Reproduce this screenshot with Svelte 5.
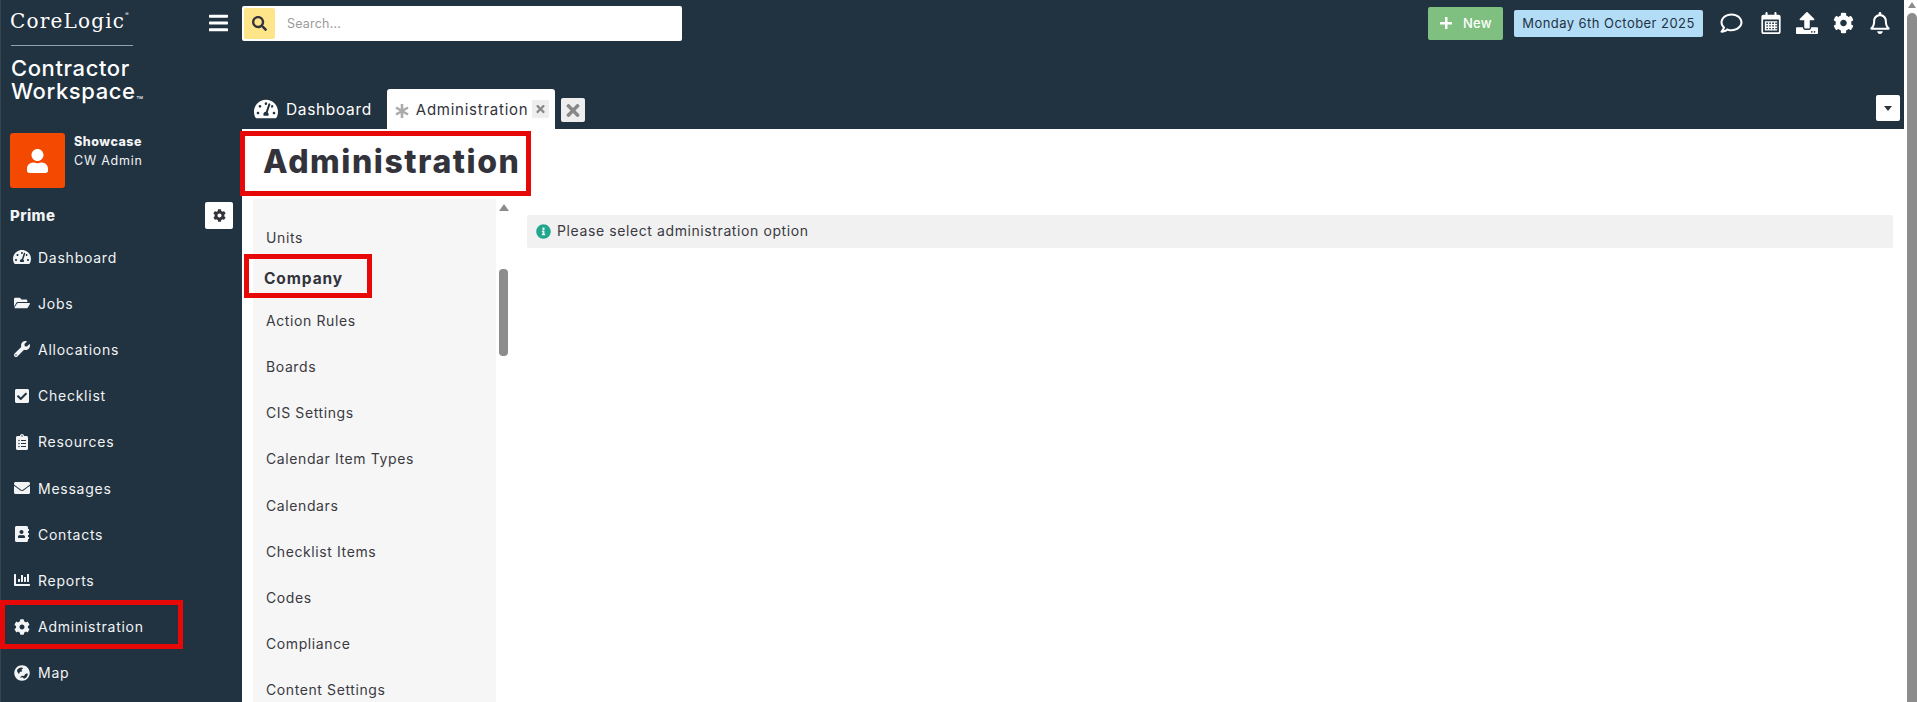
<script>
  const P = {
    tach: [576, 'M288 32C128.94 32 0 160.94 0 320c0 52.8 14.25 102.26 39.06 144.8 5.61 9.62 16.3 15.2 27.44 15.2h443c11.14 0 21.83-5.58 27.44-15.2C561.75 422.26 576 372.8 576 320c0-159.06-128.94-288-288-288zm0 64c14.71 0 26.58 10.13 30.32 23.65-1.11 2.26-2.64 4.23-3.45 6.67l-9.22 27.67c-5.13 3.49-10.97 6.01-17.64 6.01-17.67 0-32-14.33-32-32S270.33 96 288 96zM96 384c-17.67 0-32-14.33-32-32s14.33-32 32-32 32 14.33 32 32-14.33 32-32 32zm48-160c-17.67 0-32-14.33-32-32s14.33-32 32-32 32 14.33 32 32-14.33 32-32 32zm246.77-72.41l-61.33 184C343.13 347.33 352 364.54 352 384c0 11.72-3.38 22.55-8.88 32H232.88c-5.5-9.45-8.88-20.28-8.88-32 0-33.94 26.5-61.43 59.9-63.59l61.34-184.01c4.17-12.56 17.73-19.45 30.36-15.17 12.57 4.19 19.35 17.77 15.17 30.36zm14.66 57.2l15.52-46.55c3.47-1.29 7.13-2.23 11.05-2.23 17.67 0 32 14.33 32 32s-14.33 32-32 32c-11.38-.01-20.89-6.28-26.57-15.22zM480 384c-17.67 0-32-14.33-32-32s14.33-32 32-32 32 14.33 32 32-14.33 32-32 32z'],
    folder: [576, 'M572.694 292.093L500.27 416.248A63.997 63.997 0 0 1 444.989 448H45.025c-18.523 0-30.064-20.093-20.731-36.093l72.424-124.155A64 64 0 0 1 152 256h399.964c18.523 0 30.064 20.093 20.73 36.093zM152 224h328v-48c0-26.51-21.49-48-48-48H272l-64-64H48C21.49 64 0 85.49 0 112v278.046l69.077-118.418C86.214 242.25 117.989 224 152 224z'],
    wrench: [512, 'M507.73 109.1c-2.24-9.03-13.54-12.09-20.12-5.51l-74.36 74.36-67.88-11.31-11.31-67.88 74.36-74.36c6.62-6.62 3.43-17.9-5.66-20.16-47.38-11.74-99.55.91-136.58 37.93-39.64 39.64-50.55 97.1-34.05 147.2L18.74 402.76c-24.99 24.99-24.99 65.51 0 90.5 24.99 24.99 65.51 24.99 90.5 0l213.21-213.21c50.12 16.71 107.47 5.68 147.37-34.22 37.07-37.07 49.7-89.32 37.91-136.73zM64 472c-13.25 0-24-10.75-24-24 0-13.26 10.75-24 24-24s24 10.74 24 24c0 13.25-10.75 24-24 24z'],
    check: [448, 'M400 480H48c-26.51 0-48-21.49-48-48V80c0-26.51 21.49-48 48-48h352c26.51 0 48 21.49 48 48v352c0 26.51-21.49 48-48 48zm-204.686-98.059l184-184c6.248-6.248 6.248-16.379 0-22.627l-22.627-22.627c-6.248-6.248-16.379-6.249-22.628 0L184 302.745l-70.059-70.059c-6.248-6.248-16.379-6.248-22.628 0l-22.627 22.627c-6.248 6.248-6.248 16.379 0 22.627l104 104c6.249 6.25 16.379 6.25 22.628.001z'],
    clip: [384, 'M336 64h-80c0-35.3-28.7-64-64-64s-64 28.7-64 64H48C21.5 64 0 85.5 0 112v352c0 26.5 21.5 48 48 48h288c26.5 0 48-21.5 48-48V112c0-26.5-21.5-48-48-48zM96 424c-13.3 0-24-10.7-24-24s10.7-24 24-24 24 10.7 24 24-10.7 24-24 24zm0-96c-13.3 0-24-10.7-24-24s10.7-24 24-24 24 10.7 24 24-10.7 24-24 24zm0-96c-13.3 0-24-10.7-24-24s10.7-24 24-24 24 10.7 24 24-10.7 24-24 24zm96-192c13.3 0 24 10.7 24 24s-10.7 24-24 24-24-10.7-24-24 10.7-24 24-24zm128 368c0 4.4-3.6 8-8 8H168c-4.4 0-8-3.6-8-8v-16c0-4.4 3.6-8 8-8h144c4.4 0 8 3.6 8 8v16zm0-96c0 4.4-3.6 8-8 8H168c-4.4 0-8-3.6-8-8v-16c0-4.4 3.6-8 8-8h144c4.4 0 8 3.6 8 8v16zm0-96c0 4.4-3.6 8-8 8H168c-4.4 0-8-3.6-8-8v-16c0-4.4 3.6-8 8-8h144c4.4 0 8 3.6 8 8v16z'],
    env: [512, 'M502.3 190.8c3.9-3.1 9.7-.2 9.7 4.7V400c0 26.5-21.5 48-48 48H48c-26.5 0-48-21.5-48-48V195.6c0-5 5.7-7.8 9.7-4.7 22.4 17.4 52.1 39.5 154.1 113.6 21.1 15.4 56.7 47.8 92.2 47.6 35.7.3 72-32.8 92.3-47.6 102-74.1 131.6-96.3 154-113.7zM256 320c23.2.4 56.6-29.2 73.4-41.4 132.7-96.3 142.8-104.7 173.4-128.7 5.8-4.5 9.2-11.5 9.2-18.9v-19c0-26.5-21.5-48-48-48H48C21.5 64 0 85.5 0 112v19c0 7.4 3.4 14.3 9.2 18.9 30.6 23.9 40.7 32.4 173.4 128.7 16.8 12.2 50.2 41.8 73.4 41.4z'],
    book: [448, 'M436 160c6.6 0 12-5.4 12-12v-40c0-6.6-5.4-12-12-12h-20V48c0-26.5-21.5-48-48-48H48C21.5 0 0 21.5 0 48v416c0 26.5 21.5 48 48 48h320c26.5 0 48-21.5 48-48v-48h20c6.6 0 12-5.4 12-12v-40c0-6.6-5.4-12-12-12h-20v-64h20c6.6 0 12-5.4 12-12v-40c0-6.6-5.4-12-12-12h-20v-64h20zm-228-32c35.3 0 64 28.7 64 64s-28.7 64-64 64-64-28.7-64-64 28.7-64 64-64zm112 236.8c0 10.6-10 19.2-22.4 19.2H118.4C106 384 96 375.4 96 364.8v-19.2c0-31.8 30.1-57.6 67.2-57.6h5c12.3 5.1 25.7 8 39.8 8s27.6-2.9 39.8-8h5c37.1 0 67.2 25.8 67.2 57.6v19.2z'],
    chart: [512, 'M332.8 320h38.4c6.4 0 12.8-6.4 12.8-12.8V172.8c0-6.4-6.4-12.8-12.8-12.8h-38.4c-6.4 0-12.8 6.4-12.8 12.8v134.4c0 6.4 6.4 12.8 12.8 12.8zm96 0h38.4c6.4 0 12.8-6.4 12.8-12.8V76.8c0-6.4-6.4-12.8-12.8-12.8h-38.4c-6.4 0-12.8 6.4-12.8 12.8v230.4c0 6.4 6.4 12.8 12.8 12.8zm-288 0h38.4c6.4 0 12.8-6.4 12.8-12.8v-70.4c0-6.4-6.4-12.8-12.8-12.8h-38.4c-6.4 0-12.8 6.4-12.8 12.8v70.4c0 6.4 6.4 12.8 12.8 12.8zm96 0h38.4c6.4 0 12.8-6.4 12.8-12.8V108.8c0-6.4-6.4-12.8-12.8-12.8h-38.4c-6.4 0-12.8 6.4-12.8 12.8v198.4c0 6.4 6.4 12.8 12.8 12.8zM496 384H64V80c0-8.84-7.16-16-16-16H16C7.16 64 0 71.16 0 80v336c0 17.67 14.33 32 32 32h464c8.84 0 16-7.16 16-16v-32c0-8.84-7.16-16-16-16z'],
    cog: [512, 'M487.4 315.7l-42.6-24.6c4.3-23.2 4.3-47 0-70.2l42.6-24.6c4.9-2.8 7.1-8.6 5.5-14-11.1-35.6-30-67.8-54.7-94.6-3.8-4.1-10-5.1-14.8-2.3L380.8 110c-17.9-15.4-38.5-27.3-60.8-35.1V25.8c0-5.6-3.9-10.5-9.4-11.7-36.7-8.2-74.3-7.8-109.2 0-5.5 1.2-9.4 6.1-9.4 11.7V75c-22.2 7.9-42.8 19.8-60.8 35.1L88.7 85.5c-4.9-2.8-11-1.9-14.8 2.3-24.7 26.7-43.6 58.9-54.7 94.6-1.7 5.4.6 11.2 5.5 14L67.3 221c-4.3 23.2-4.3 47 0 70.2l-42.6 24.6c-4.9 2.8-7.1 8.6-5.5 14 11.1 35.6 30 67.8 54.7 94.6 3.8 4.1 10 5.1 14.8 2.3l42.6-24.6c17.9 15.4 38.5 27.3 60.8 35.1v49.2c0 5.6 3.9 10.5 9.4 11.7 36.7 8.2 74.3 7.8 109.2 0 5.5-1.2 9.4-6.1 9.4-11.7v-49.2c22.2-7.9 42.8-19.8 60.8-35.1l42.6 24.6c4.9 2.8 11 1.9 14.8-2.3 24.7-26.7 43.6-58.9 54.7-94.6 1.5-5.5-.7-11.3-5.6-14.1zM256 336c-44.1 0-80-35.9-80-80s35.9-80 80-80 80 35.9 80 80-35.9 80-80 80z'],
    globe: [512, 'M256 8C119 8 8 119 8 256s111 248 248 248 248-111 248-248S393 8 256 8zm-16 70c18 0 30 8 44 16 10 6 6 18-4 22l-30 16c-12 6-14 20-6 30l14 18c8 10 2 24-10 26l-40 8c-14 2-26 14-30 28l-8 26c-4 14-20 16-28 4l-32-46c-8-12-12-26-12-42 0-58 72-106 142-106zm160 190c18 0 40 4 40 18 0 58-42 120-96 146-10 4-22 2-30-4l-34-26c-12-8-28-10-42-4l-18 8c-14 4-24-10-14-22l24-28c10-12 26-18 42-14l24 6c14 4 28-2 36-14l24-38c8-16 26-28 44-28z'],
    user: [448, 'M224 256c70.7 0 128-57.3 128-128S294.7 0 224 0 96 57.3 96 128s57.3 128 128 128zm89.6 32h-16.7c-22.2 10.2-46.9 16-72.9 16s-50.6-5.8-72.9-16h-16.7C60.2 288 0 348.2 0 422.4V464c0 26.5 21.5 48 48 48h352c26.5 0 48-21.5 48-48v-41.6c0-74.2-60.2-134.4-134.4-134.4z'],
    info: [512, 'M256 8C119.043 8 8 119.083 8 256c0 136.997 111.043 248 248 248s248-111.003 248-248C504 119.083 392.957 8 256 8zm0 110c23.196 0 42 18.804 42 42s-18.804 42-42 42-42-18.804-42-42 18.804-42 42-42zm56 254c0 6.627-5.373 12-12 12h-88c-6.627 0-12-5.373-12-12v-24c0-6.627 5.373-12 12-12h12v-64h-12c-6.627 0-12-5.373-12-12v-24c0-6.627 5.373-12 12-12h64c6.627 0 12 5.373 12 12v100h12c6.627 0 12 5.373 12 12v24z'],
    times: [352, 'M242.72 256l100.07-100.07c12.28-12.28 12.28-32.19 0-44.48l-22.24-22.24c-12.28-12.28-32.19-12.28-44.48 0L176 189.28 75.93 89.21c-12.28-12.28-32.19-12.28-44.48 0L9.21 111.45c-12.28 12.28-12.28 32.19 0 44.48L109.28 256 9.21 356.07c-12.28 12.28-12.28 32.19 0 44.48l22.24 22.24c12.28 12.28 32.2 12.28 44.48 0L176 322.72l100.07 100.07c12.28 12.28 32.2 12.28 44.48 0l22.24-22.24c12.28-12.28 12.28-32.19 0-44.48L242.72 256z'],
    bars: [448, 'M16 132h416c8.837 0 16-7.163 16-16V76c0-8.837-7.163-16-16-16H16C7.163 60 0 67.163 0 76v40c0 8.837 7.163 16 16 16zm0 160h416c8.837 0 16-7.163 16-16v-40c0-8.837-7.163-16-16-16H16c-8.837 0-16 7.163-16 16v40c0 8.837 7.163 16 16 16zm0 160h416c8.837 0 16-7.163 16-16v-40c0-8.837-7.163-16-16-16H16c-8.837 0-16 7.163-16 16v40c0 8.837 7.163 16 16 16z'],
    search: [512, 'M505 442.7L405.3 343c-4.5-4.5-10.6-7-17-7H372c27.6-35.3 44-79.7 44-128C416 93.1 322.9 0 208 0S0 93.1 0 208s93.1 208 208 208c48.3 0 92.7-16.4 128-44v16.3c0 6.4 2.5 12.5 7 17l99.7 99.7c9.4 9.4 24.6 9.4 33.9 0l28.3-28.3c9.4-9.4 9.4-24.6.1-34zM208 336c-70.7 0-128-57.2-128-128 0-70.7 57.2-128 128-128 70.7 0 128 57.2 128 128 0 70.7-57.2 128-128 128z'],
    upload: [512, 'M296 384h-80c-13.3 0-24-10.7-24-24V192h-87.7c-17.8 0-26.7-21.5-14.1-34.1L242.3 5.7c7.5-7.5 19.8-7.5 27.3 0l152.2 152.2c12.6 12.6 3.7 34.1-14.1 34.1H320v168c0 13.3-10.7 24-24 24zm216-8v112c0 13.3-10.7 24-24 24H24c-13.3 0-24-10.7-24-24V376c0-13.3 10.7-24 24-24h136v8c0 30.9 25.1 56 56 56h80c30.9 0 56-25.1 56-56v-8h136c13.3 0 24 10.7 24 24zm-124 88c0-11-9-20-20-20s-20 9-20 20 9 20 20 20 20-9 20-20zm64 0c0-11-9-20-20-20s-20 9-20 20 9 20 20 20 20-9 20-20z'],
    comment: [512, 'M256 32C114.6 32 0 125.1 0 240c0 47.6 19.9 91.2 52.9 126.3C38 405.7 7 439.1 6.5 439.5c-6.6 7-8.4 17.2-4.6 26S14.4 480 24 480c61.5 0 110-25.7 139.1-46.3C192 442.8 223.2 448 256 448c141.4 0 256-93.1 256-208S397.4 32 256 32zm0 368c-26.7 0-53.1-4.1-78.4-12.1l-22.7-7.2-19.5 13.8c-14.3 10.1-33.9 21.4-57.5 29 7.3-12.1 14.4-25.7 19.9-40.2l10.6-28.1-20.6-21.8C69.7 314.1 48 282.2 48 240c0-88.2 93.3-160 208-160s208 71.8 208 160-93.3 160-208 160z'],
    bell: [448, 'M439.39 362.29c-19.32-20.76-55.47-51.99-55.47-154.29 0-77.7-54.48-139.9-127.94-155.16V32c0-17.67-14.32-32-31.98-32s-31.98 14.33-31.98 32v20.84C118.56 68.1 64.08 130.3 64.08 208c0 102.3-36.15 133.53-55.47 154.29-6 6.45-8.66 14.16-8.61 21.71.11 16.4 12.98 32 32.1 32h383.8c19.12 0 32-15.6 32.1-32 .05-7.55-2.61-15.27-8.61-21.71zM67.53 368c21.22-27.97 44.42-74.33 44.53-159.42 0-.2-.06-.38-.06-.58 0-61.86 50.14-112 112-112s112 50.14 112 112c0 .2-.06.38-.06.58.11 85.1 23.31 131.46 44.53 159.42H67.53zM224 512c35.32 0 63.97-28.65 63.97-64H160.03c0 35.35 28.65 64 63.97 64z'],
    cal: [448, 'M400 64h-48V24c0-13-11-24-24-24s-24 11-24 24v40H144V24c0-13-11-24-24-24S96 11 96 24v40H48C21.5 64 0 85.5 0 112v352c0 26.5 21.5 48 48 48h352c26.5 0 48-21.5 48-48V112c0-26.5-21.5-48-48-48zm8 400c0 4.4-3.6 8-8 8H48c-4.4 0-8-3.6-8-8V176h368v288zM80 216v216h288V216H80zm72 64h-36v-36h36v36zm68 0h-36v-36h36v36zm72 0h-40v-36h40v36zm44 0h-12v-36h36v36h-24zm-184 60h-36v-32h36v32zm68 0h-36v-32h36v32zm72 0h-40v-32h40v32zm56 0h-24v-32h36v32h-12zm-196 64h-36v-32h36v32zm68 0h-36v-32h36v32zm72 0h-40v-32h40v32zm68 0h-36v-32h36v32z']
  };
  const nav = [['tach','Dashboard'],['folder','Jobs'],['wrench','Allocations'],['check','Checklist'],['clip','Resources'],['env','Messages'],['book','Contacts'],['chart','Reports'],['cog','Administration'],['globe','Map']];
  const adminItems = ['Action Rules','Boards','CIS Settings','Calendar Item Types','Calendars','Checklist Items','Codes','Compliance','Content Settings'];
</script>

{#snippet icon(name, cls)}
  <svg class={cls} viewBox="0 0 {P[name][0]} 512" fill="currentColor" fill-rule="evenodd" aria-hidden="true"><path d={P[name][1]} /></svg>
{/snippet}

<div class="app">
  <aside class="sidebar">
    <div class="brand">
      <div class="brand-top">
        <div class="corelogic">CoreLogic<sup>®</sup></div>
        {@render icon('bars', 'ic-bars')}
      </div>
      <div class="rule"></div>
      <div class="workspace">Contractor<br />Workspace<small>TM</small></div>
    </div>
    <div class="profile">
      <div class="avatar">{@render icon('user', 'ic-avatar')}</div>
      <div class="who"><strong>Showcase</strong><span>CW Admin</span></div>
    </div>
    <div class="prime">
      <strong>Prime</strong>
      <button class="prime-btn">{@render icon('cog', 'ic-prime')}</button>
    </div>
    <nav class="nav">
      {#each nav as [ic, label]}
        <div class="nav-item">
          <span class="nav-ic">{@render icon(ic, 'ic-nav ' + ic)}</span>
          <span>{label}</span>
        </div>
      {/each}
    </nav>
  </aside>

  <main class="main">
    <header class="head">
      <div class="topbar">
        <div class="search">
          <span class="search-btn">{@render icon('search', 'ic-search')}</span>
          <span class="search-ph">Search...</span>
        </div>
        <div class="spacer"></div>
        <button class="new"><span class="plus"></span>New</button>
        <div class="date">Monday 6th October 2025</div>
        <div class="tools">
          {@render icon('comment', 'ic-tool t-comment')}
          {@render icon('cal', 'ic-tool t-cal')}
          {@render icon('upload', 'ic-tool t-up')}
          {@render icon('cog', 'ic-tool t-cog')}
          {@render icon('bell', 'ic-tool t-bell')}
        </div>
      </div>
      <div class="tabs">
        <div class="tab">{@render icon('tach', 'ic-tab')}Dashboard</div>
        <div class="tab active">
          <svg class="ic-ast" viewBox="0 0 16 16" aria-hidden="true"><path d="M8 1v14M2 4.5l12 7M14 4.5l-12 7" /></svg>
          <span>Administration</span>
          <span class="tab-x">{@render icon('times', 'ic-x')}</span>
        </div>
        <span class="close-all">{@render icon('times', 'ic-xl')}</span>
        <div class="spacer"></div>
        <button class="caret"><span></span></button>
      </div>
    </header>

    <div class="body">
      <h1 class="title">Administration</h1>
      <div class="split">
        <div class="list-wrap">
          <div class="list">
            <div class="item first">Units</div>
            <div class="group">Company</div>
            {#each adminItems as it}
              <div class="item">{it}</div>
            {/each}
          </div>
          <div class="list-scroll">
            <span class="arrow"></span>
            <span class="thumb"></span>
          </div>
        </div>
        <div class="content">
          <div class="alert">{@render icon('info', 'ic-info')}Please select administration option</div>
        </div>
      </div>
    </div>
  </main>

  <div class="page-scroll"><span class="arrow"></span><span class="thumb"></span></div>

  <div class="mark m-title"></div>
  <div class="mark m-company"></div>
  <div class="mark m-nav"></div>
</div>

<style>
  :global(body) { margin: 0; background: #fff; overflow: hidden; }
  .app {
    position: relative; display: flex; height: 702px; overflow: hidden;
    font-family: Inter, "Open Sans", sans-serif; color: #33333b;
  }
  .sidebar {
    width: 242px; flex: none; background: #213240; color: #f2f4f5;
    border-left: 1px solid #33434f; box-sizing: border-box; font-size: 14px;
  }
  .brand { padding: 8px 0 0 9px; height: 133px; box-sizing: border-box; color: #fff; }
  .brand-top { display: flex; align-items: center; justify-content: space-between; height: 26px; padding-right: 14px; }
  .corelogic { font-family: "DejaVu Serif", serif; font-size: 20px; line-height: 26px; letter-spacing: 1.2px; font-weight: 400; }
  .corelogic sup { font-size: 5px; vertical-align: 12px; line-height: 0; font-family: Inter, sans-serif; letter-spacing: 0; }
  .ic-bars { width: 19px; height: 22px; color: #fff; margin-top: 4px; }
  .rule { width: 122px; height: 1px; background: #96a0a7; margin: 11px 0 11px 1px; }
  .workspace { font-size: 22px; line-height: 22.5px; font-weight: 500; letter-spacing: .6px; margin-left: 1px; }
  .workspace small { font-size: 4px; letter-spacing: 0; margin-left: 1px; }
  .profile { display: flex; padding-left: 9px; gap: 9px; height: 69px; }
  .avatar {
    width: 55px; height: 55px; border-radius: 3px; background: #f44900;
    display: flex; align-items: center; justify-content: center; color: #fff;
  }
  .ic-avatar { width: 21px; height: 24px; }
  .who { display: flex; flex-direction: column; line-height: 19px; margin-top: -1px; }
  .who strong { font-weight: 800; font-size: 12.5px; letter-spacing: .5px; }
  .who span { font-size: 12.5px; letter-spacing: .75px; }
  .prime { display: flex; align-items: center; justify-content: space-between; height: 27px; padding: 0 9px 0 9px; margin-bottom: 5px; font-size: 15px; letter-spacing: .4px; }
  .prime strong { font-weight: 800; }
  .prime-btn {
    width: 28px; height: 27px; padding: 0; border: 0; border-radius: 2px; background: #fff; color: #33333b;
    display: flex; align-items: center; justify-content: center;
  }
  .ic-prime { width: 13px; height: 13px; }
  .nav-item { display: flex; align-items: center; height: 46.2px; font-size: 14px; letter-spacing: .75px; }
  .nav-ic { width: 37px; display: flex; justify-content: center; flex: none; padding-left: 4px; box-sizing: border-box; }
  .ic-nav { height: 16px; width: 16px; }
  .ic-nav.tach { width: 18px; height: 18px; }
  .main { flex: 1; min-width: 0; display: flex; flex-direction: column; }
  .head { background: #213240; height: 129px; flex: none; margin-right: 3px; display: flex; flex-direction: column; }
  .topbar { display: flex; align-items: center; height: 46px; }
  .search {
    width: 440px; height: 35px; background: #fff; border-radius: 2px; display: flex; align-items: center;
    box-sizing: border-box; padding-left: 2px; margin-top: 1px;
  }
  .search-btn {
    width: 31px; height: 31px; background: #ffe58a; border-radius: 2px; color: #33333b;
    display: flex; align-items: center; justify-content: center;
  }
  .ic-search { width: 15px; height: 15px; }
  .search-ph { margin-left: 12px; font-size: 12.5px; color: #9a9a9a; letter-spacing: .2px; }
  .spacer { flex: 1; }
  .new {
    width: 75px; height: 33px; border: 0; border-radius: 2px; background: #7fbf80; color: #fff; padding: 0 0 1px 12px;
    display: flex; align-items: center; font: 500 13px Inter, sans-serif; margin: 1px 11px 0 0; letter-spacing: .2px;
  }
  .plus { width: 12px; height: 12px; margin-right: 11px; display: block; background:
    linear-gradient(#fff,#fff) center/12px 2.5px no-repeat, linear-gradient(#fff,#fff) center/2.5px 12px no-repeat; }
  .date {
    width: 189px; height: 27px; background: #b3dcf7; border-radius: 2px; color: #22333f; font-size: 13px; padding-bottom: 1px; box-sizing: border-box;
    display: flex; align-items: center; justify-content: center; letter-spacing: .45px; margin-right: 17px;
  }
  .tools { display: flex; align-items: center; color: #fff; width: 173px; margin-right: 11px; }
  .ic-tool { height: 22px; flex: none; }
  .t-comment { width: 23px; margin-right: 18px; }
  .t-cal { width: 20px; margin-right: 15px; }
  .t-up { width: 22px; margin-right: 15px; }
  .t-cog { width: 21px; margin-right: 16px; }
  .t-bell { width: 20px; }
  .tabs { flex: 1; display: flex; align-items: flex-end; padding-right: 4px; }
  .tab { display: flex; align-items: center; height: 40px; font-size: 15.5px; color: #fff; padding-left: 12px; margin-right: 15px; letter-spacing: .65px; }
  .ic-tab { width: 24px; height: 24px; margin-right: 8px; }
  .tab.active {
    width: 168px; box-sizing: border-box; padding-left: 7px; margin-right: 6px; background: #fff; color: #33333b;
    border-radius: 3px 3px 0 0; font-size: 15px; letter-spacing: .75px;
  }
  .ic-ast { width: 16px; height: 16px; fill: none; stroke: #aaa; stroke-width: 2.6; margin: 3px 6px 0 0; flex: none; }
  .tab-x {
    width: 17px; height: 18px; margin-left: 4px; background: #eee; border-radius: 1px; color: #888;
    display: flex; align-items: center; justify-content: center; flex: none;
  }
  .ic-x { width: 9px; height: 12px; }
  .close-all {
    width: 24px; height: 24px; background: #eee; border-radius: 2px; color: #888; margin-bottom: 7px;
    display: flex; align-items: center; justify-content: center;
  }
  .ic-xl { width: 14px; height: 19px; }
  .caret {
    width: 24px; height: 26px; background: #fff; border: 0; border-radius: 2px; padding: 0; margin-bottom: 8px;
    display: flex; align-items: center; justify-content: center;
  }
  .caret span { width: 0; height: 0; border: 4px solid transparent; border-top: 5px solid #33333b; border-bottom: 0; }
  .body { flex: 1; min-height: 0; }
  .title { margin: 0; padding-left: 21px; height: 70px; box-sizing: border-box; font-size: 32px; line-height: 66px; font-weight: 800; color: #33333b; letter-spacing: 1.55px; }
  .split { display: flex; }
  .list-wrap { display: flex; width: 269px; margin-left: 11px; flex: none; }
  .list { width: 243px; background: #f6f6f6; padding-top: 15px; flex: none; height: 520px; box-sizing: border-box; }
  .item { height: 46.2px; display: flex; align-items: center; padding-left: 13px; font-size: 14px; letter-spacing: .6px; color: #3a3a42; }
  .group { height: 35px; display: flex; align-items: center; padding: 2px 0 0 11px; box-sizing: border-box; font-size: 15.5px; font-weight: 700; margin-bottom: 2px; letter-spacing: .9px; }
  .list-scroll { width: 16px; margin-left: 3px; display: flex; flex-direction: column; align-items: flex-start; }
  .list-scroll .arrow { margin-top: 5px; border-left: 5px solid transparent; border-right: 5px solid transparent; border-bottom: 7px solid #8c8c8c; }
  .list-scroll .thumb { width: 9px; height: 87px; margin-top: 58px; background: #8c8c8c; border-radius: 4px; }
  .content { flex: 1; padding: 16px 14px 0 5px; }
  .alert {
    height: 33px; background: #f1f1f1; border-radius: 2px; display: flex; align-items: center; box-sizing: border-box;
    padding: 0 0 2px 9px; font-size: 14px; letter-spacing: .6px; color: #3a3a42;
  }
  .ic-info { width: 15px; height: 15px; margin: 2px 6px 0 0; color: #22a78f; flex: none; }
  .page-scroll { width: 10px; flex: none; display: flex; flex-direction: column; align-items: center; background: #fff; }
  .page-scroll .arrow { margin-top: 2px; border: 4.5px solid transparent; border-bottom: 6px solid #8c8c8c; border-top: 0; }
  .page-scroll .thumb { width: 100%; flex: 1; margin-top: 5px; background: #8c8c8c; border-radius: 5px 5px 0 0; }
  .mark { position: absolute; border: 5px solid #e70808; box-sizing: border-box; pointer-events: none; }
  .m-title { left: 240px; top: 131px; width: 291px; height: 65px; }
  .m-company { left: 244px; top: 254px; width: 128px; height: 44px; }
  .m-nav { left: 0; top: 600px; width: 183px; height: 49px; }
</style>
